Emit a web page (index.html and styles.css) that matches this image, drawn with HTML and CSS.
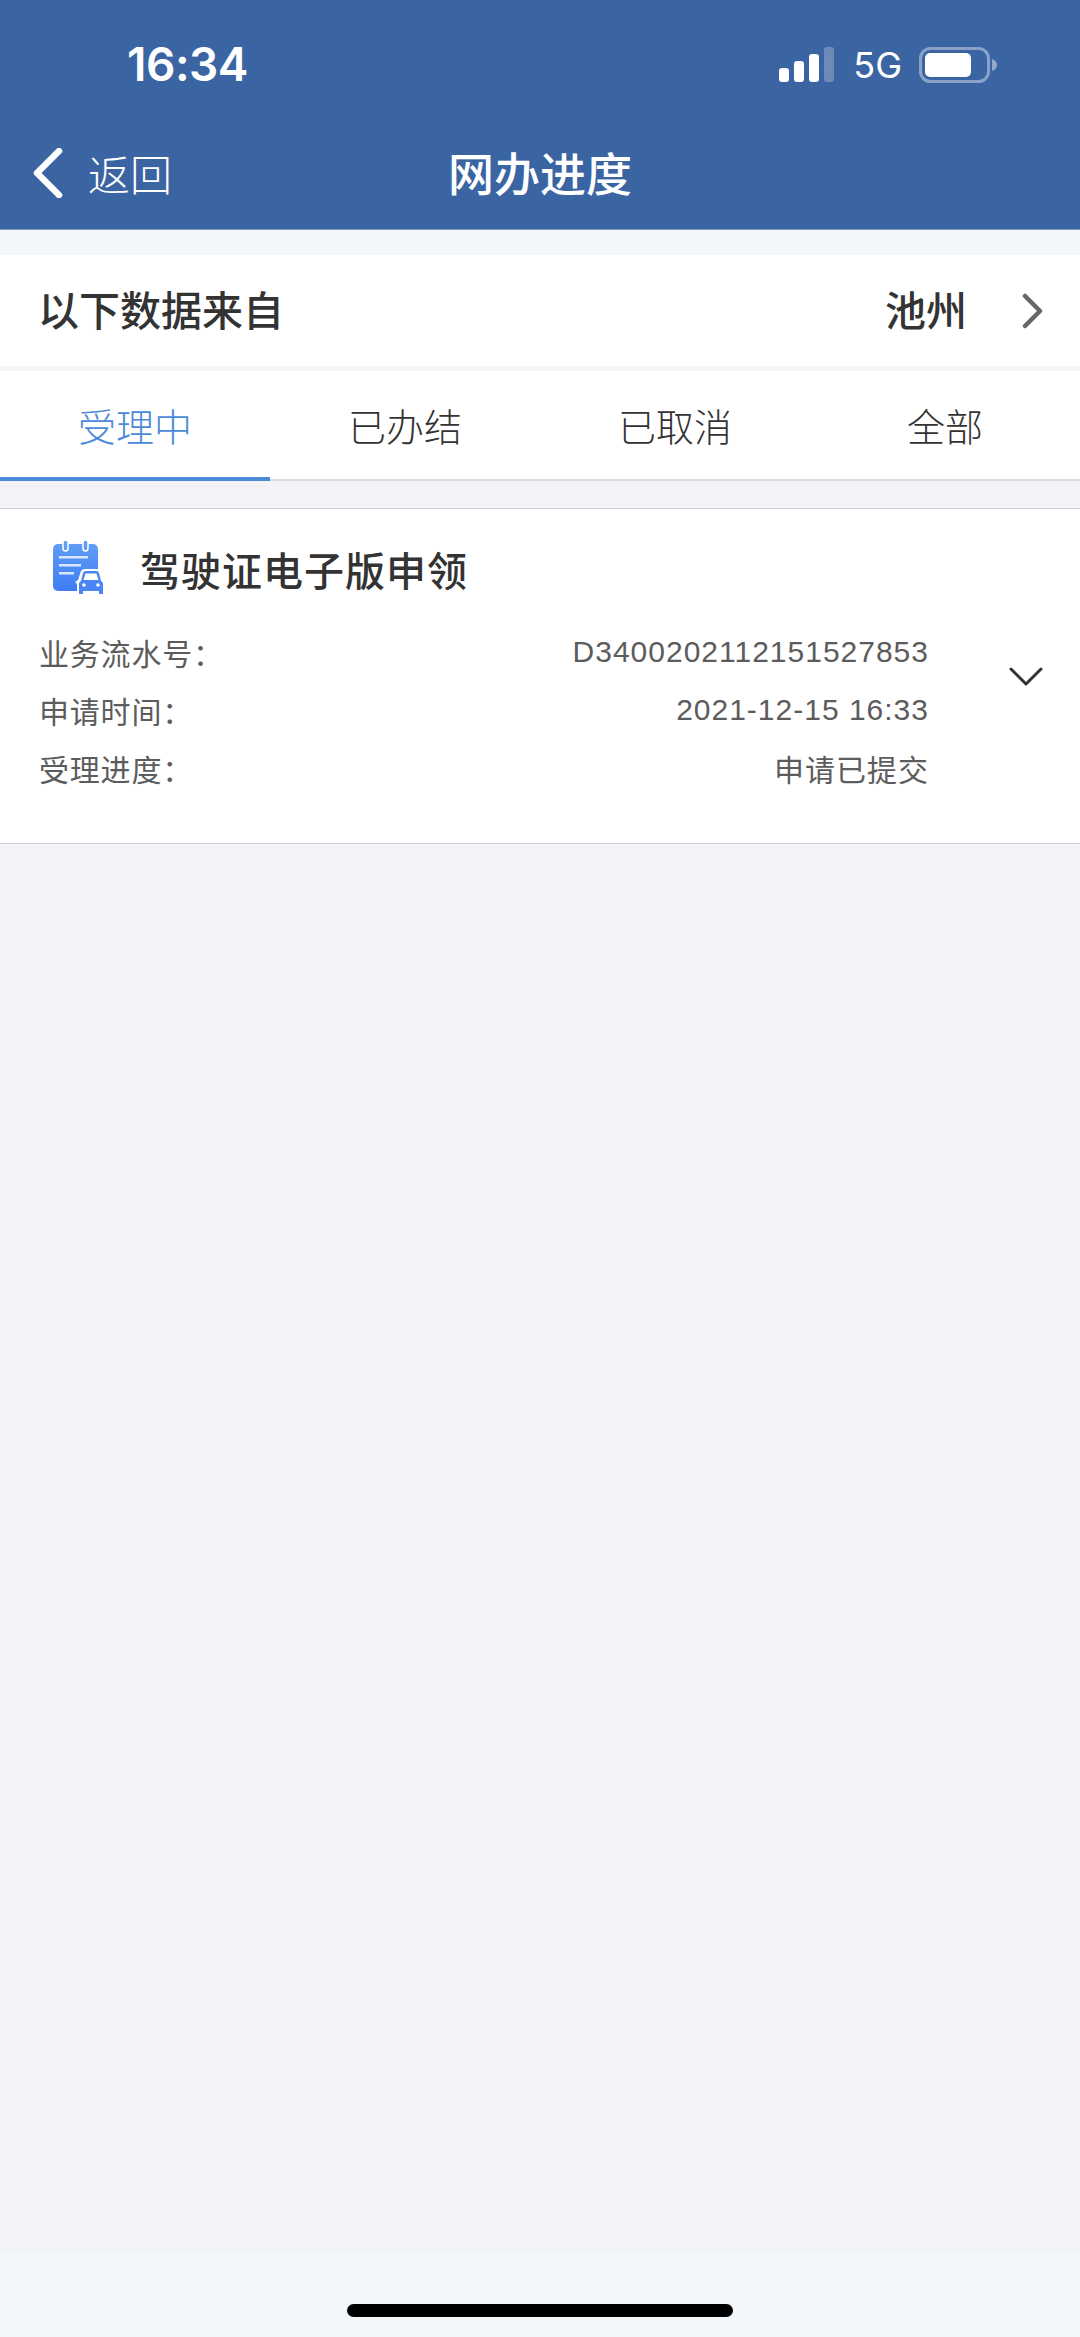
FILE: index.html
```html
<!DOCTYPE html>
<html lang="zh">
<head>
    <meta charset="UTF-8">
    <meta name="viewport" content="width=device-width, initial-scale=1.0">
    <title>网办进度</title>
    <link rel="stylesheet" href="styles.css">
</head>
<body>
    <div id="page">
        <div class="header">
            <div class="status-bar">
                <span class="time">16:34</span>
                <div class="status-icons">
                    <svg class="signal" width="55" height="35" viewBox="0 0 55 35">
                        <rect x="0" y="21" width="10" height="14" rx="3" fill="#fff"/>
                        <rect x="15" y="14" width="10" height="21" rx="3" fill="#fff"/>
                        <rect x="30" y="7" width="10" height="28" rx="3" fill="#fff"/>
                        <rect x="45" y="0" width="10" height="35" rx="3" fill="#fff" fill-opacity="0.25"/>
                    </svg>
                    <span class="network">5G</span>
                    <svg class="battery" width="79" height="36" viewBox="0 0 79 36">
                        <rect x="1.500" y="1.500" width="68" height="33" rx="10" fill="none" stroke="#fff" stroke-opacity="0.4" stroke-width="3"/>
                        <rect x="6" y="6" width="46" height="24" rx="5" fill="#fff"/>
                        <path d="M73 12 C76 13 78 15 78 18 C78 21 76 23 73 24 Z" fill="#fff" fill-opacity="0.45"/>
                    </svg>
                </div>
            </div>
            <div class="nav-bar">
                <div class="back">
                    <svg width="30" height="50" viewBox="0 0 30 50">
                        <path d="M26 3 L4 25 L26 47" fill="none" stroke="#fff" stroke-width="6.500" stroke-linecap="round" stroke-linejoin="round"/>
                    </svg>
                    <span>返回</span>
                </div>
                <div class="nav-title">网办进度</div>
            </div>
        </div>

        <div class="source-row">
            <span class="source-label">以下数据来自</span>
            <span class="source-city">池州</span>
            <svg class="source-arrow" width="22" height="36" viewBox="0 0 22 36">
                <path d="M3 3 L18 18 L3 33" fill="none" stroke="#666" stroke-width="4.500" stroke-linecap="round" stroke-linejoin="round"/>
            </svg>
        </div>

        <div class="tabs">
            <div class="tab active">受理中</div>
            <div class="tab">已办结</div>
            <div class="tab">已取消</div>
            <div class="tab">全部</div>
        </div>

        <div class="content">
            <div class="card">
                <div class="card-title">
                    <svg class="card-icon" width="52" height="56" viewBox="0 0 52 56">
                        <defs>
                            <linearGradient id="paper" x1="0" y1="0" x2="0" y2="1">
                                <stop offset="0" stop-color="#5f9df7"/>
                                <stop offset="1" stop-color="#3f7cf3"/>
                            </linearGradient>
                        </defs>
                        <rect x="0" y="4" width="45" height="47" rx="5" fill="url(#paper)"/>
                        <rect x="10" y="0" width="5" height="11" rx="2.500" fill="#5f9df7" stroke="#fff" stroke-width="1.500"/>
                        <rect x="30" y="0" width="5" height="11" rx="2.500" fill="#5f9df7" stroke="#fff" stroke-width="1.500"/>
                        <rect x="6" y="16" width="29" height="2.500" fill="#d9e7fd"/>
                        <rect x="6" y="24" width="22" height="2.500" fill="#d9e7fd"/>
                        <rect x="6" y="32" width="15" height="2.500" fill="#d9e7fd"/>
                        <path d="M24 55 V44 L22 42 L25 40 L28 31 Q29 29 32 29 H44 Q47 29 48 31 L50 40 L52 42 L51 44 V55 Z" fill="#fff"/>
                        <path d="M26 54 V44 Q26 42 28 41 L30 33 Q30.500 31 33 31 H43 Q45.500 31 46 33 L48 41 Q50 42 50 44 V54 H46 V51 H30 V54 Z" fill="#4a86f5"/>
                        <path d="M30.500 40 L32.500 33.500 H43.500 L45.500 40 Z" fill="#fff"/>
                        <circle cx="31" cy="45" r="1.800" fill="#fff"/>
                        <circle cx="45" cy="45" r="1.800" fill="#fff"/>
                    </svg>
                    <span>驾驶证电子版申领</span>
                </div>
                <div class="card-body">
                    <div class="info">
                        <div class="info-row"><span>业务流水号：</span><span class="info-value">D3400202112151527853</span></div>
                        <div class="info-row"><span>申请时间：</span><span class="info-value">2021-12-15 16:33</span></div>
                        <div class="info-row"><span>受理进度：</span><span class="info-value">申请已提交</span></div>
                    </div>
                    <svg class="expand" width="34" height="20" viewBox="0 0 34 20">
                        <path d="M2 2 L17 17 L32 2" fill="none" stroke="#333" stroke-width="3" stroke-linecap="round" stroke-linejoin="round"/>
                    </svg>
                </div>
            </div>
        </div>

        <div class="home-area">
            <div class="home-bar"></div>
        </div>
    </div>
</body>
</html>
```

FILE: styles.css
```css
html, body {
    margin: 0;
    padding: 0;
}
body {
    width: 1080px;
    height: 2337px;
    overflow: hidden;
    font-family: "Liberation Sans", "Noto Sans CJK SC", sans-serif;
    background-color: #f4f7f9;
}
#page {
    height: 2337px;
    display: flex;
    flex-direction: column;
}
.header {
    height: 230px;
    flex: none;
    background-color: #3b65a2;
    color: #fff;
    box-sizing: border-box;
    border-bottom: 1px solid #7f9cc2;
}
.status-bar {
    height: 117px;
    padding: 10px 82px 0 127px;
    display: flex;
    justify-content: space-between;
    align-items: center;
    box-sizing: border-box;
}
.time {
    font-size: 46px;
    font-weight: 600;
    font-family: Inter, sans-serif;
    letter-spacing: -0.5px;
}
.status-icons {
    display: flex;
    align-items: center;
    margin-top: 2px;
}
.signal {
    margin-right: 19px;
}
.network {
    font-size: 36px;
    font-family: Inter, sans-serif;
    margin-right: 17px;
}
.nav-bar {
    height: 112px;
    display: flex;
    align-items: center;
    justify-content: center;
    position: relative;
}
.back {
    position: absolute;
    left: 33px;
    top: 0;
    bottom: 2px;
    display: flex;
    align-items: center;
    gap: 25px;
    font-size: 42px;
}
.back svg {
    margin-top: 2px;
}
.back span {
    font-family: "Noto Sans CJK SC", sans-serif;
    font-weight: 300;
}
.nav-title {
    font-family: "Noto Sans CJK SC", sans-serif;
    font-size: 46px;
    font-weight: 500;
    margin-bottom: 4px;
}
.source-row {
    margin-top: 25px;
    height: 111px;
    flex: none;
    background-color: #fff;
    display: flex;
    align-items: center;
    padding: 0 36px 0 38px;
    font-family: "Noto Sans CJK SC", sans-serif;
    font-size: 41px;
    font-weight: 500;
    color: #333;
}
.source-label {
    flex: 1;
    margin-bottom: 5px;
}
.source-city {
    margin-right: 55px;
    margin-bottom: 5px;
}
.tabs {
    margin-top: 5px;
    height: 110px;
    flex: none;
    box-sizing: border-box;
    background-color: #fff;
    border-bottom: 2px solid #dcdce0;
    display: grid;
    grid-template-columns: repeat(4, 1fr);
    font-family: "Noto Sans CJK SC", sans-serif;
    font-size: 38px;
    font-weight: 300;
    color: #333;
}
.tab {
    display: flex;
    align-items: center;
    justify-content: center;
    box-sizing: border-box;
    height: 108px;
    padding-bottom: 2px;
}
.tab.active {
    color: #4a8ad8;
    border-bottom: 4px solid #4a8ad8;
    height: 110px;
    padding-bottom: 0;
}
.content {
    flex: 1;
    padding-top: 27px;
    background-color: #f2f2f7;
}
.card {
    height: 336px;
    box-sizing: border-box;
    background-color: #fff;
    border-top: 1px solid #cfcfd4;
    border-bottom: 1px solid #cfcfd4;
    padding: 33px 0 0 39px;
}
.card-title {
    display: flex;
    align-items: center;
    height: 52px;
    font-family: "Noto Sans CJK SC", sans-serif;
    font-size: 40px;
    font-weight: 500;
    letter-spacing: 1px;
    color: #333;
}
.card-title span {
    margin-top: 2px;
}
.card-icon {
    margin: 0 35px 0 14px;
    flex: none;
}
.card-body {
    display: flex;
    align-items: flex-start;
    margin-top: 29px;
}
.info {
    width: 890px;
    font-size: 30px;
    color: #5c5c5c;
}
.info-row {
    height: 58px;
    display: flex;
    align-items: center;
    justify-content: space-between;
    letter-spacing: 0.8px;
}
.info-value {
    letter-spacing: 1px;
}
.expand {
    margin: 44px 0 0 80px;
}
.home-area {
    height: 86px;
    flex: none;
    background-color: #f4f7f9;
    position: relative;
}
.home-bar {
    position: absolute;
    left: 347px;
    top: 53px;
    width: 386px;
    height: 13px;
    border-radius: 7px;
    background-color: #000;
}
```
